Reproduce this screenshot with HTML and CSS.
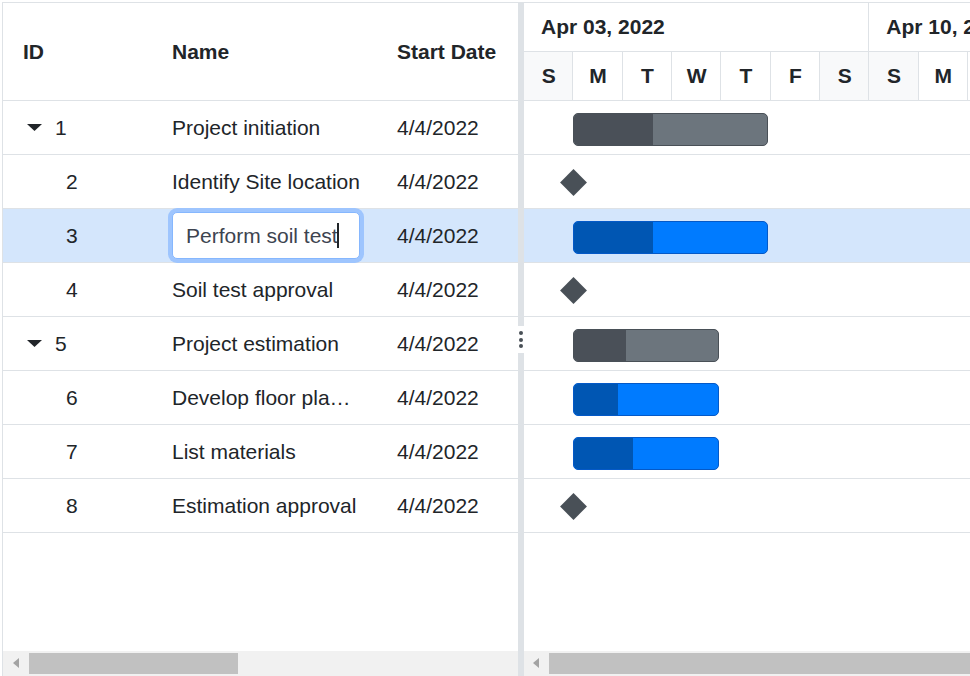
FILE: index.html
```html
<!DOCTYPE html>
<html lang="en">
<head>
<meta charset="utf-8">
<title>Gantt</title>
<link rel="stylesheet" href="styles.css">
</head>
<body>
<div class="gantt">
  <div class="grid-pane">
    <div class="grid-header">
      <div class="cell col-id">ID</div>
      <div class="cell col-name">Name</div>
      <div class="cell col-date">Start Date</div>
    </div>
    <div class="grid-body">
      <div class="row">
        <div class="cell col-id parent"><svg class="caret" width="15" height="7" viewBox="0 0 15 7"><polygon points="0,0 15,0 7.5,7" fill="#212529"/></svg><span>1</span></div>
        <div class="cell col-name"><span class="txt">Project initiation</span></div>
        <div class="cell col-date">4/4/2022</div>
      </div>
      <div class="row">
        <div class="cell col-id child">2</div>
        <div class="cell col-name"><span class="txt">Identify Site location</span></div>
        <div class="cell col-date">4/4/2022</div>
      </div>
      <div class="row selected">
        <div class="cell col-id child">3</div>
        <div class="cell col-name edit"><div class="editor"><span>Perform soil test</span><span class="cursor"></span></div></div>
        <div class="cell col-date">4/4/2022</div>
      </div>
      <div class="row">
        <div class="cell col-id child">4</div>
        <div class="cell col-name"><span class="txt">Soil test approval</span></div>
        <div class="cell col-date">4/4/2022</div>
      </div>
      <div class="row">
        <div class="cell col-id parent"><svg class="caret" width="15" height="7" viewBox="0 0 15 7"><polygon points="0,0 15,0 7.5,7" fill="#212529"/></svg><span>5</span></div>
        <div class="cell col-name"><span class="txt">Project estimation</span></div>
        <div class="cell col-date">4/4/2022</div>
      </div>
      <div class="row">
        <div class="cell col-id child">6</div>
        <div class="cell col-name"><span class="txt">Develop floor plan for estimation</span></div>
        <div class="cell col-date">4/4/2022</div>
      </div>
      <div class="row">
        <div class="cell col-id child">7</div>
        <div class="cell col-name"><span class="txt">List materials</span></div>
        <div class="cell col-date">4/4/2022</div>
      </div>
      <div class="row">
        <div class="cell col-id child">8</div>
        <div class="cell col-name"><span class="txt">Estimation approval</span></div>
        <div class="cell col-date">4/4/2022</div>
      </div>
    </div>
    <div class="hscroll">
      <span class="arrow"></span>
      <span class="thumb grid-thumb"></span>
    </div>
  </div>

  <div class="splitter"><div class="handle"><i></i><i></i><i></i></div></div>

  <div class="chart-pane">
    <div class="chart-header">
      <div class="weeks">
        <div class="week">Apr 03, 2022</div>
        <div class="week">Apr 10, 2022</div>
      </div>
      <div class="days">
        <div class="day we">S</div><div class="day">M</div><div class="day">T</div><div class="day">W</div><div class="day">T</div><div class="day">F</div><div class="day we">S</div>
        <div class="day we">S</div><div class="day">M</div><div class="day">T</div><div class="day">W</div><div class="day">T</div><div class="day">F</div><div class="day we">S</div>
      </div>
    </div>
    <div class="chart-body">
      <div class="crow"><div class="bar parent-bar" style="margin-left:49px;width:195px"><div class="progress" style="width:79px"></div></div></div>
      <div class="crow"><div class="milestone" style="margin-left:40px"></div></div>
      <div class="crow selected"><div class="bar child-bar" style="margin-left:49px;width:195px"><div class="progress" style="width:79px"></div></div></div>
      <div class="crow"><div class="milestone" style="margin-left:40px"></div></div>
      <div class="crow"><div class="bar parent-bar" style="margin-left:49px;width:146px"><div class="progress" style="width:52px"></div></div></div>
      <div class="crow"><div class="bar child-bar" style="margin-left:49px;width:146px"><div class="progress" style="width:44px"></div></div></div>
      <div class="crow"><div class="bar child-bar" style="margin-left:49px;width:146px"><div class="progress" style="width:59px"></div></div></div>
      <div class="crow"><div class="milestone" style="margin-left:40px"></div></div>
    </div>
    <div class="hscroll chart-scroll">
      <span class="arrow"></span>
      <span class="thumb chart-thumb"></span>
    </div>
  </div>
</div>
</body>
</html>
```

FILE: styles.css
```css
* { box-sizing: border-box; }
html, body { margin: 0; padding: 0; overflow: hidden; background: #fff; }
body {
  font-family: "Liberation Sans", Arial, sans-serif;
  font-size: 21px;
  color: #212529;
}
.gantt {
  margin: 2px 0 0 2px;
  width: 1200px;
  height: 674px;
  border-top: 1px solid #dee2e6;
  border-left: 1px solid #dee2e6;
  display: flex;
}
.grid-pane {
  width: 515px;
  flex: 0 0 515px;
  display: flex;
  flex-direction: column;
}
.grid-header {
  height: 98px;
  border-bottom: 1px solid #dee2e6;
  display: flex;
  align-items: center;
  font-weight: bold;
}
.grid-body { flex: 1; }
.row {
  height: 54px;
  border-bottom: 1px solid #dee2e6;
  display: flex;
  align-items: center;
}
.row.selected, .crow.selected { background: #d4e6fc; }
.cell {
  white-space: nowrap;
  overflow: hidden;
  display: flex;
  align-items: center;
}
.col-id { width: 149px; padding-left: 20px; }
.col-name { width: 226px; padding-left: 20px; padding-right: 18px; }
.col-date { width: 140px; padding-left: 19px; }
.col-id.parent { padding-left: 24px; }
.col-id.parent .caret { margin-right: 13px; flex: none; }
.col-id.child { padding-left: 63px; }
.txt {
  display: block;
  overflow: hidden;
  text-overflow: ellipsis;
  white-space: nowrap;
  min-width: 0;
}
.col-name.edit { padding-left: 20px; padding-right: 0; height: 53px; overflow: visible; }
.editor {
  width: 188px;
  height: 47px;
  border: 1px solid #86b7fe;
  border-radius: 5px;
  background: #fff;
  box-shadow: 0 0 0 4px #9ec5fe;
  display: flex;
  align-items: center;
  padding-left: 13px;
  color: #3d4450;
}
.cursor {
  width: 2px;
  height: 25px;
  background: #212529;
  margin-left: -1px;
}
.hscroll {
  height: 25px;
  background: #f1f1f1;
  display: flex;
  align-items: flex-start;
  padding-left: 10px;
}
.hscroll .arrow {
  width: 0; height: 0;
  margin-top: 7px;
  border-top: 5px solid transparent;
  border-bottom: 5px solid transparent;
  border-right: 6px solid #a3a3a3;
}
.hscroll .thumb {
  height: 21px;
  margin-top: 2px;
  background: #c1c1c1;
}
.grid-thumb { width: 209px; margin-left: 10px; }
.chart-scroll { padding-left: 9px; }
.chart-thumb { width: 600px; margin-left: 10px; }

.splitter {
  flex: 0 0 6px;
  width: 6px;
  background: #dee2e6;
  display: flex;
  flex-direction: column;
  justify-content: center;
}
.handle {
  height: 27px;
  background: #fff;
  display: flex;
  flex-direction: column;
  align-items: center;
  justify-content: center;
  gap: 2.5px;
}
.handle i {
  display: block;
  width: 4px; height: 4px;
  border-radius: 50%;
  background: #495057;
}

.chart-pane {
  flex: 0 0 700px;
  display: flex;
  flex-direction: column;
}
.chart-header { height: 98px; border-bottom: 1px solid #dee2e6; font-weight: bold; }
.weeks { display: flex; height: 49px; border-bottom: 1px solid #dee2e6; }
.week {
  width: 345.333px;
  flex: none;
  border-right: 1px solid #dee2e6;
  padding-left: 17px;
  display: flex;
  align-items: center;
}
.days { display: grid; grid-template-columns: repeat(14, 49.333px); height: 48px; }
.day {
  border-right: 1px solid #dee2e6;
  display: flex;
  align-items: center;
  justify-content: center;
  padding-left: 1px;
}
.day.we { background: #f8f9fa; }
.chart-body { flex: 1; }
.crow {
  height: 54px;
  border-bottom: 1px solid #dee2e6;
  display: flex;
  align-items: flex-start;
}
.bar {
  margin-top: 12px;
  height: 33px;
  border-radius: 5px;
  overflow: hidden;
  display: flex;
}
.bar .progress { height: 100%; border-radius: 4px 0 0 4px; }
.parent-bar { background: #6c757d; border: 1px solid #495057; }
.parent-bar .progress { background: #4a5058; }
.child-bar { background: #007bff; border: 1px solid #0459c7; }
.child-bar .progress { background: #0056b3; }
.milestone {
  width: 19px;
  height: 19px;
  margin-top: 18px;
  background: #495057;
  transform: rotate(45deg);
}
```
